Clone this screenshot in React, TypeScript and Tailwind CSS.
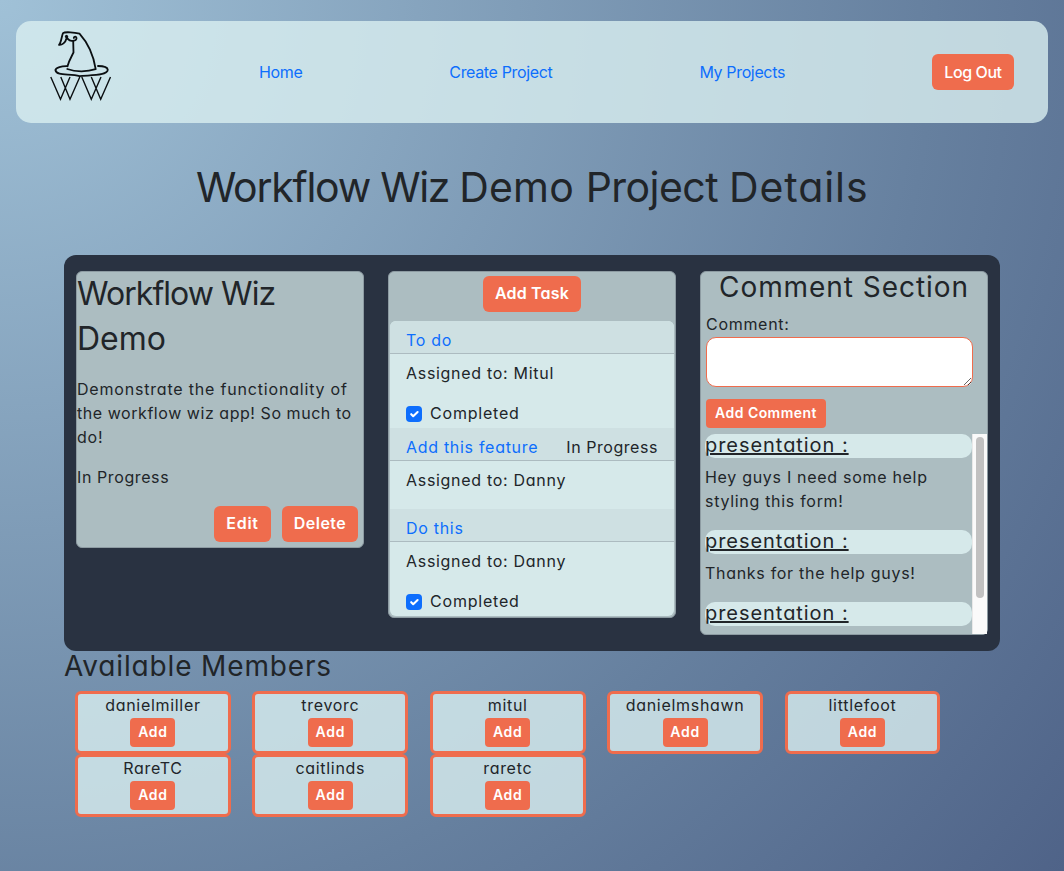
import React from "react";

const comments = [
  { author: "presentation :", text: "Hey guys I need some help styling this form!" },
  { author: "presentation :", text: "Thanks for the help guys!" },
  { author: "presentation :", text: "" },
];

const tasks = [
  { name: "To do", who: "Mitul", status: "", done: true },
  { name: "Add this feature", who: "Danny", status: "In Progress", done: false },
  { name: "Do this", who: "Danny", status: "", done: true },
];

const members = ["danielmiller", "trevorc", "mitul", "danielmshawn", "littlefoot", "RareTC", "caitlinds", "raretc"];

function Logo() {
  return (
    <svg width="62" height="72" viewBox="50 30 62 72" fill="none" stroke="#0b0f12" strokeLinecap="round" strokeLinejoin="round">
      <g strokeWidth="1.8">
        <path d="M67.500 66.300C69 60.500 71.500 56.500 73.500 52.500L73.200 41" />
        <path d="M66.500 36.500L68 39.200C69.500 41 72 41.200 74 40.600C76 40.300 77 39 76.300 37.300C75.300 36.200 73.700 36.800 73.800 38" />
        <path d="M66.500 35.800V38.500C65.500 42.500 62 45.300 59 44.800C61.300 42.500 61.500 36.500 63 33.200C65 31.400 75 32.600 79.500 33.600C88 43 93.500 55 95.700 69.200C87 72 75.500 72 67.300 69" />
        <path d="M67.300 66.200C61.500 66 56 67.500 55.400 70C56.500 76.500 70 73.200 79.500 76.200C89 75 107.500 76 107.800 69.800C107.500 67 103 66 98 66" />
      </g>
      <circle cx="66.500" cy="36.500" r="1.200" fill="#0b0f12" strokeWidth="0.6" />
      <path strokeWidth="1.400" strokeLinecap="butt" strokeLinejoin="miter" d="M50.800 77L60.500 99.200L70 77M60.800 77L70 99.200L79.800 77M81.800 77L91.300 99.200L101 77M91.300 77L100.700 99.200L110.500 77" />
    </svg>
  );
}

function Check() {
  return (
    <span className="mt-px grid size-4 place-items-center rounded bg-[#0d6efd]">
      <svg className="size-4" viewBox="0 0 20 20" fill="none" stroke="#fff" strokeWidth="2.600" strokeLinecap="round" strokeLinejoin="round">
        <path d="m6.500 10.200 2.500 2.500 5.500-5.200" />
      </svg>
    </span>
  );
}

export default function App() {
  return (
    <div className="h-[871px] overflow-hidden bg-[radial-gradient(circle_farthest-corner_at_0_0,#a0c1d7_0%,#66809f_68%,#4f6388_100%)] pt-[21px] font-['Inter',sans-serif] text-base leading-6 tracking-[0.7px] text-[#212529] [font-feature-settings:'cv11']">
      <nav className="mx-4 flex h-[102px] items-center justify-between rounded-[15px] bg-[#d9eff0]/80 px-[34px] tracking-[-0.35px] text-[#0d6efd] [font-feature-settings:normal]">
        <div className="h-[86px] pt-px"><Logo /></div>
        <a>Home</a>
        <a>Create Project</a>
        <a>My Projects</a>
        <button className="h-9 w-[82px] rounded-md bg-[#ef6c4d] font-medium tracking-[-0.4px] text-white">Log Out</button>
      </nav>

      <h1 className="mt-10 h-[92px] pl-[196px] text-[41px] leading-[48px] whitespace-nowrap">
        <span className="tracking-[-1.250px]">Workflow </span>
        <span className="tracking-[-1.400px]">Wiz </span>
        <span className="tracking-[0.2px]">Demo </span>
        <span className="tracking-[-0.550px]">Project </span>
        <span className="tracking-[0.9px]">Details</span>
      </h1>

      <main className="mx-16 grid h-[396px] grid-cols-3 items-start gap-6 rounded-xl bg-[#293241] px-3 pt-4">
        <section className="h-[277px] rounded-md border border-[#8d9ba2] bg-[#acbdc1]">
          <h2 className="-mt-px text-[32px] leading-[45px] tracking-[-0.950px]">Workflow Wiz<br /><span className="tracking-normal">Demo</span></h2>
          <p className="mt-4 tracking-[0.810px]">Demonstrate the functionality of<br /><span className="tracking-[0.550px]">the workflow wiz app! So much to</span><br />do!</p>
          <p className="mt-4 tracking-[0.6px]">In Progress</p>
          <div className="mt-[17px] flex justify-end gap-[11px] pr-[5px] font-semibold text-white">
            <button className="h-9 w-[57px] rounded-md bg-[#ef6c4d] pb-0.5">Edit</button>
            <button className="h-9 w-[76px] rounded-md bg-[#ef6c4d] pb-0.5 tracking-[0.5px]">Delete</button>
          </div>
        </section>

        <section className="h-[347px] rounded-md border border-[#8d9ba2] bg-[#acbdc1] px-px pt-1">
          <button className="mx-auto block h-9 w-[98px] rounded-md bg-[#ef6c4d] pb-0.5 font-semibold tracking-[0.2px] text-white">Add Task</button>
          <div className="mt-[9px] overflow-hidden rounded-md bg-[#d6e9ea]">
            {tasks.map((t) => (
              <div key={t.name}>
                <div className="flex h-[33px] items-end justify-between border-b border-[#acbbc0] bg-[#cee0e2] px-4">
                  <a className="mb-px text-[#0d6efd]">{t.name}</a>
                  <span className="mb-px tracking-[0.550px]">{t.status}</span>
                </div>
                <div className={t.done ? "h-[74px] px-4 pt-[7px]" : "h-12 px-4 pt-[7px]"}>
                  <p>Assigned to: {t.who}</p>
                  {t.done && (
                    <label className="mt-4 flex items-center gap-2 tracking-[0.8px]"><Check />Completed</label>
                  )}
                </div>
              </div>
            ))}
          </div>
        </section>

        <section className="flex h-[364px] flex-col rounded-md border border-[#8d9ba2] bg-[#acbdc1]">
          <h2 className="text-center text-[28px] leading-[31px] tracking-[0.950px]">Comment Section</h2>
          <label className="mt-[9px] pl-[5px]">Comment:</label>
          <textarea className="mt-px ml-[5px] block h-[50px] w-[267px] shrink-0 resize rounded-[10px] border border-[#ef6c4d] bg-white" />
          <button className="mt-3 ml-[5px] h-[29px] w-[120px] shrink-0 rounded bg-[#ef6c4d] pb-0.5 text-sm font-semibold tracking-[0.450px] text-white">Add Comment</button>
          <div className="mt-[6px] flex h-[200px]">
            <div className="w-[271px] overflow-hidden pl-1">
              {comments.map((c, i) => (
                <div key={i} className="mb-4">
                  <h3 className="mb-[7px] h-6 rounded-[10px] bg-[#d6e9ea] text-xl leading-[22px] tracking-[0.950px] underline decoration-2">{c.author}</h3>
                  <p className="mb-[17px]">{c.text}</p>
                </div>
              ))}
            </div>
            <div className="w-[15px] border-l border-[#e8e8e8] bg-[#fafafa] px-[3px] pt-[3px]">
              <div className="h-[161px] w-2 rounded-full bg-[#c1c1c1]" />
            </div>
          </div>
        </section>
      </main>

      <h2 className="ml-16 text-[28px] leading-[31px] tracking-[0.850px]">Available Members</h2>
      <div className="mt-[9px] ml-[75px] grid grid-cols-[repeat(5,155.900px)] gap-x-[21.500px]">
        {members.map((m) => (
          <div key={m} className="flex h-[63px] flex-col items-center rounded-md border-3 border-[#ef6c4d] bg-[#d9eff0]/80">
            <span className="-mt-px mb-px">{m}</span>
            <button className="h-[29px] w-[45px] rounded bg-[#ef6c4d] pb-0.5 text-sm font-semibold text-white">Add</button>
          </div>
        ))}
      </div>
    </div>
  );
}
